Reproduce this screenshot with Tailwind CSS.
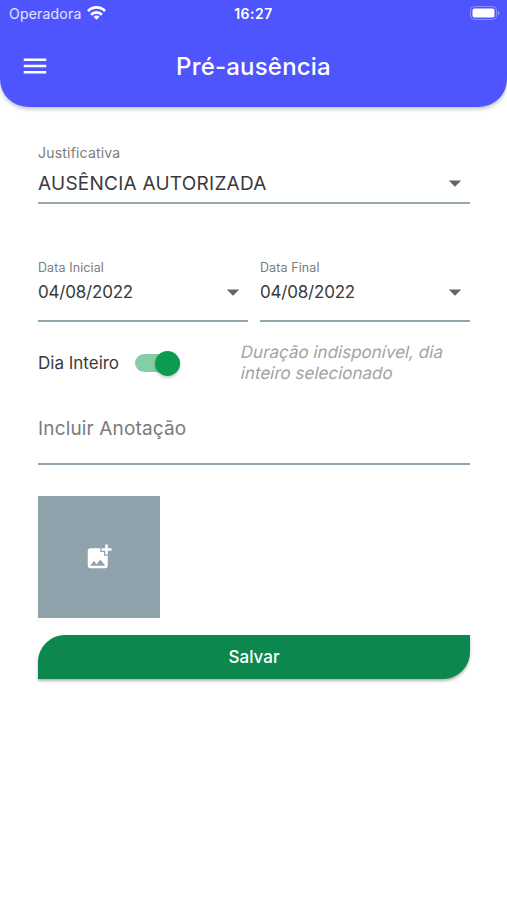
<!DOCTYPE html>
<html lang="pt-BR">
<head>
  <meta charset="UTF-8" />
  <meta name="viewport" content="width=device-width, initial-scale=1" />
  <title>Pré-ausência</title>
  <script src="https://cdn.jsdelivr.net/npm/@tailwindcss/browser@4"></script>
</head>
<body class="bg-white min-h-screen font-['Inter',sans-serif] text-[#3a3a3a] overflow-hidden">

  <!-- Cabeçalho -->
  <header class="h-[107px] bg-[#4f55fe] rounded-b-[28px] shadow-[0_2px_4px_rgba(0,0,0,0.25)] text-white">
    <div class="h-7 grid grid-cols-3 items-center pl-[9px] pr-[7px]">
      <div class="flex items-center gap-1.5">
        <span class="text-sm tracking-[0.2px] text-white/85">Operadora</span>
        <svg class="w-[19px] h-[14px] -mt-0.5" viewBox="0 0 19 14" fill="none" stroke="#fff" stroke-width="2.7">
          <path d="M1 5a12 12 0 0 1 17 0" />
          <path d="M4.1 8.7a7.6 7.6 0 0 1 10.8 0" />
          <path d="M9.5 13.8l-3-3.1a4.2 4.2 0 0 1 6 0z" fill="#fff" stroke="none" />
        </svg>
      </div>
      <span class="pr-0.5 text-sm font-semibold text-center tracking-[0.5px]">16:27</span>
      <svg class="w-[30px] h-[14px] -mt-0.5 justify-self-end" viewBox="0 0 30 14">
        <rect x="0.5" y="0.5" width="26" height="13" rx="4" fill="none" stroke="#fff" stroke-opacity=".35" />
        <rect x="2.5" y="2.5" width="22" height="9" rx="2" fill="#fff" />
        <path d="M28 4.7c1.6.7 1.6 3.9 0 4.6z" fill="#fff" fill-opacity=".5" />
      </svg>
    </div>
    <div class="h-[76px] grid grid-cols-[30px_1fr_30px] items-center px-5">
      <svg class="w-[30px] h-[30px]" viewBox="0 0 24 24" fill="#fff"><path d="M3 18h18v-2H3v2zm0-5h18v-2H3v2zm0-7v2h18V6H3z" /></svg>
      <h1 class="pt-0.5 text-2xl font-medium text-center tracking-[0.2px]">Pré-ausência</h1>
    </div>
  </header>

  <main class="pl-[38px] pr-[37px] pt-[37px]">

    <!-- Justificativa -->
    <div class="h-[60px] border-b-2 border-[#93a9a9]">
      <div class="h-[18px] leading-[18px] text-sm tracking-[0.2px] text-[#7c7c7c]">Justificativa</div>
      <div class="flex items-center justify-between h-[41px]">
        <span class="pt-[3px] text-[19px] tracking-[0.25px]">AUSÊNCIA AUTORIZADA</span>
        <svg class="w-[30px] h-[30px]" viewBox="0 0 24 24" fill="#666"><path d="M7 10l5 5 5-5z" /></svg>
      </div>
    </div>

    <!-- Datas -->
    <div class="mt-[55px] grid grid-cols-2 gap-3">
      <div class="h-[63px] border-b-2 border-[#8fa5ae]">
        <div class="h-4 pt-px leading-4 text-[12.5px] tracking-[0.1px] text-[#7c7c7c]">Data Inicial</div>
        <div class="flex items-center justify-between h-[34px]">
          <span class="pt-0.5 text-[17px] tracking-[-0.2px]">04/08/2022</span>
          <svg class="w-[30px] h-[30px]" viewBox="0 0 24 24" fill="#666"><path d="M7 10l5 5 5-5z" /></svg>
        </div>
      </div>
      <div class="h-[63px] border-b-2 border-[#8fa5ae]">
        <div class="h-4 pt-px leading-4 text-[12.5px] tracking-[0.1px] text-[#7c7c7c]">Data Final</div>
        <div class="flex items-center justify-between h-[34px]">
          <span class="pt-0.5 text-[17px] tracking-[-0.2px]">04/08/2022</span>
          <svg class="w-[30px] h-[30px]" viewBox="0 0 24 24" fill="#666"><path d="M7 10l5 5 5-5z" /></svg>
        </div>
      </div>
    </div>

    <!-- Dia inteiro -->
    <div class="flex h-[82px]">
      <div class="flex items-center w-[203px] h-[82px]">
        <span class="pt-0.5 text-[17px] w-[97px] whitespace-nowrap">Dia Inteiro</span>
        <div class="flex items-center justify-end w-[45px] h-[18px] rounded-full bg-[#85cda4]">
          <div class="w-[25px] h-[25px] shrink-0 rounded-full bg-[#0c9c50] shadow-[0_2px_3px_rgba(0,0,0,0.2)]"></div>
        </div>
      </div>
      <p class="pt-5 text-[17px] leading-[21px] text-[#a3a3a3] whitespace-nowrap">
        <span class="block w-fit -skew-x-12">Duração indisponível, dia</span>
        <span class="block w-fit -skew-x-12">inteiro selecionado</span>
      </p>
    </div>

    <!-- Anotação -->
    <div class="h-[61px] border-b-2 border-[#93a3ab]">
      <div class="h-12 pt-px leading-[48px] text-[19px] tracking-[0.15px] text-[#7a7a7a]">Incluir Anotação</div>
    </div>

    <!-- Foto -->
    <div class="mt-[31px] w-[122px] h-[122px] bg-[#90a3ac] flex items-center justify-center">
      <svg class="w-[30px] h-[30px]" viewBox="0 0 24 24" fill="#fff"><path d="M19 7v2.99s-1.99.01-2 0V7h-3s.01-1.99 0-2h3V2h2v3h3v2h-3zm-3 4V8h-3V5H5c-1.1 0-2 .9-2 2v12c0 1.1.9 2 2 2h12c1.1 0 2-.9 2-2v-8h-3zM5 19l3-4 2 3 3-4 4 5H5z" /></svg>
    </div>

    <button class="mt-[17px] pt-0.5 w-full h-11 bg-[#0c874e] rounded-tl-[27px] rounded-br-[27px] text-white text-[17px] font-medium shadow-[0_2px_3px_rgba(0,0,0,0.3)]">Salvar</button>
  </main>

</body>
</html>
